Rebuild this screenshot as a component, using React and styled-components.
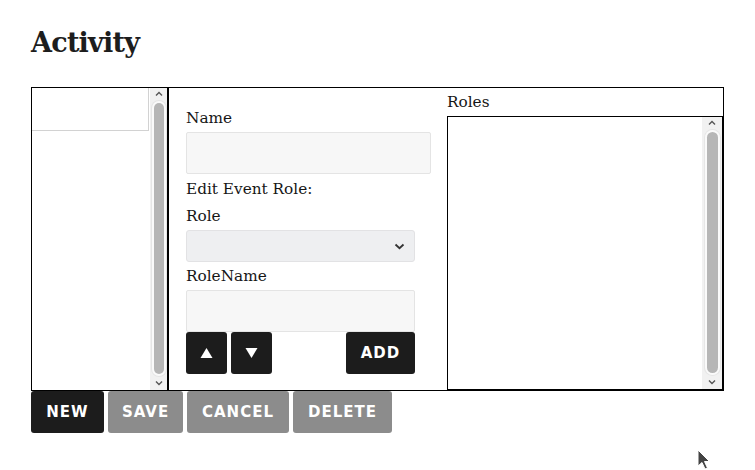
import React from 'react';
import styled, { createGlobalStyle } from 'styled-components';

const Global = createGlobalStyle`
  html, body { margin: 0; padding: 0; background: #fff; }
  body { font-family: "DejaVu Serif", serif; color: #161616; }
  * { box-sizing: border-box; }
`;

const Page = styled.div`
  position: relative;
  height: 470px;
  padding: 25px 31px 0;
  overflow: hidden;
`;

const Title = styled.h1`
  margin: 0;
  font-size: 27px;
  line-height: 36px;
  font-weight: 700;
  letter-spacing: -0.75px;
  color: #1d1d1d;
`;

const Editor = styled.div`
  margin-top: 26px;
  width: 693px;
  height: 304px;
  border: 1px solid #000;
  display: flex;
`;

const ListPane = styled.div`
  width: 137px;
  border-right: 2px solid #000;
  display: flex;
`;

const List = styled.div`
  flex: 1;
`;

const ListItem = styled.div`
  width: 117px;
  height: 43px;
  border-right: 1px solid #d2d2d2;
  border-bottom: 1px solid #d2d2d2;
  background: #fff;
`;

const Track = styled.div`
  width: ${p => p.$w}px;
  background: #f1f1f1;
  display: flex;
  flex-direction: column;
  align-items: center;
  padding: 3px 0 4px;
`;

const Arrow = styled.svg`
  width: 8px;
  height: 6px;
  flex: none;
`;

const Thumb = styled.div`
  flex: 1;
  width: ${p => p.$w}px;
  margin: 6px 0;
  border-radius: 6px;
  background: #b6b6b6;
  box-shadow: 0 0 0 2px #fafafa, 0 0 0 3px #e6e6e6;
`;

const Scrollbar = ({ w, thumb }) => (
  <Track $w={w}>
    <Arrow viewBox="0 0 8 6">
      <path d="M1 4.5 L4 1.5 L7 4.5" fill="none" stroke="#555" strokeWidth="1.4" />
    </Arrow>
    <Thumb $w={thumb} />
    <Arrow viewBox="0 0 8 6">
      <path d="M1 1.5 L4 4.5 L7 1.5" fill="none" stroke="#555" strokeWidth="1.4" />
    </Arrow>
  </Track>
);

const FormPane = styled.div`
  width: 278px;
  padding: 17px 0 0 17px;
  display: flex;
  flex-direction: column;
`;

const Label = styled.label`
  display: block;
  font-size: 15.3px;
  line-height: 27px;
  margin-top: ${p => p.$mt || 0}px;
  color: #161616;
`;

const TextInput = styled.input`
  display: block;
  width: ${p => p.$w}px;
  height: 42px;
  margin: 0;
  padding: 0 10px;
  border: 1px solid #e4e4e4;
  border-radius: 2px;
  background: #f7f7f7;
  outline: none;
`;

const SelectBox = styled.div`
  width: 229px;
  height: 32px;
  border: 1px solid #e2e2e4;
  border-radius: 3px;
  background: #eeeff1;
  display: flex;
  align-items: center;
  justify-content: flex-end;
  padding-right: 9px;
`;

const Controls = styled.div`
  width: 229px;
  display: flex;
  align-items: center;
`;

const Btn = styled.button`
  height: 42px;
  width: ${p => (p.$w ? `${p.$w}px` : 'auto')};
  margin: 0 ${p => p.$mr || 0}px 0 0;
  padding: 0;
  border: none;
  border-radius: 3px;
  background: ${p => (p.$muted ? '#8c8c8c' : '#1c1c1c')};
  color: #fff;
  font-family: "DejaVu Sans", sans-serif;
  font-weight: 700;
  font-size: 15px;
  letter-spacing: 1px;
  text-transform: uppercase;
  display: flex;
  align-items: center;
  justify-content: center;
`;

const Spacer = styled.div`
  flex: 1;
`;

const RolesPane = styled.div`
  flex: 1;
  display: flex;
  flex-direction: column;
`;

const RolesLabel = styled.div`
  font-size: 15.3px;
  line-height: 28px;
`;

const RolesBox = styled.div`
  flex: 1;
  border: 1px solid #000;
  display: flex;
`;

const RolesList = styled.div`
  flex: 1;
`;

const ActionBar = styled.div`
  display: flex;
  gap: 4px;
`;

const Cursor = styled.svg`
  position: absolute;
  left: 697px;
  top: 449px;
  width: 16px;
  height: 24px;
`;

const Tri = styled.svg`
  width: 13px;
  height: 12px;
`;

export default function App() {
  return (
    <>
      <Global />
      <Page>
        <Title>Activity</Title>
        <Editor>
          <ListPane>
            <List>
              <ListItem />
            </List>
            <Scrollbar w={17} thumb={10} />
          </ListPane>
          <FormPane>
            <Label>Name</Label>
            <TextInput $w={245} />
            <Label $mt={2}>Edit Event Role:</Label>
            <Label>Role</Label>
            <SelectBox>
              <svg width="11" height="7" viewBox="0 0 11 7">
                <path d="M1.5 1.5 L5.5 5.2 L9.5 1.5" fill="none" stroke="#333" strokeWidth="1.8" />
              </svg>
            </SelectBox>
            <Label $mt={1}>RoleName</Label>
            <TextInput $w={229} />
            <Controls>
              <Btn $w={41} $mr={4} aria-label="up">
                <Tri viewBox="0 0 13 12"><path d="M6.5 1 L12.5 11 L0.5 11 Z" fill="#fff" /></Tri>
              </Btn>
              <Btn $w={41} aria-label="down">
                <Tri viewBox="0 0 13 12"><path d="M0.5 1 L12.5 1 L6.5 11 Z" fill="#fff" /></Tri>
              </Btn>
              <Spacer />
              <Btn $w={69}>Add</Btn>
            </Controls>
          </FormPane>
          <RolesPane>
            <RolesLabel>Roles</RolesLabel>
            <RolesBox>
              <RolesList />
              <Scrollbar w={20} thumb={11} />
            </RolesBox>
          </RolesPane>
        </Editor>
        <ActionBar>
          <Btn $w={73}>New</Btn>
          <Btn $w={75} $muted>Save</Btn>
          <Btn $w={102} $muted>Cancel</Btn>
          <Btn $w={99} $muted>Delete</Btn>
        </ActionBar>
        <Cursor viewBox="0 0 16 24">
          <path d="M1 1 L1 17 L5 13.5 L8 20 L10.5 19 L7.5 12.5 L12.5 12.5 Z" fill="#444" stroke="#fff" strokeWidth="1" />
        </Cursor>
      </Page>
    </>
  );
}
